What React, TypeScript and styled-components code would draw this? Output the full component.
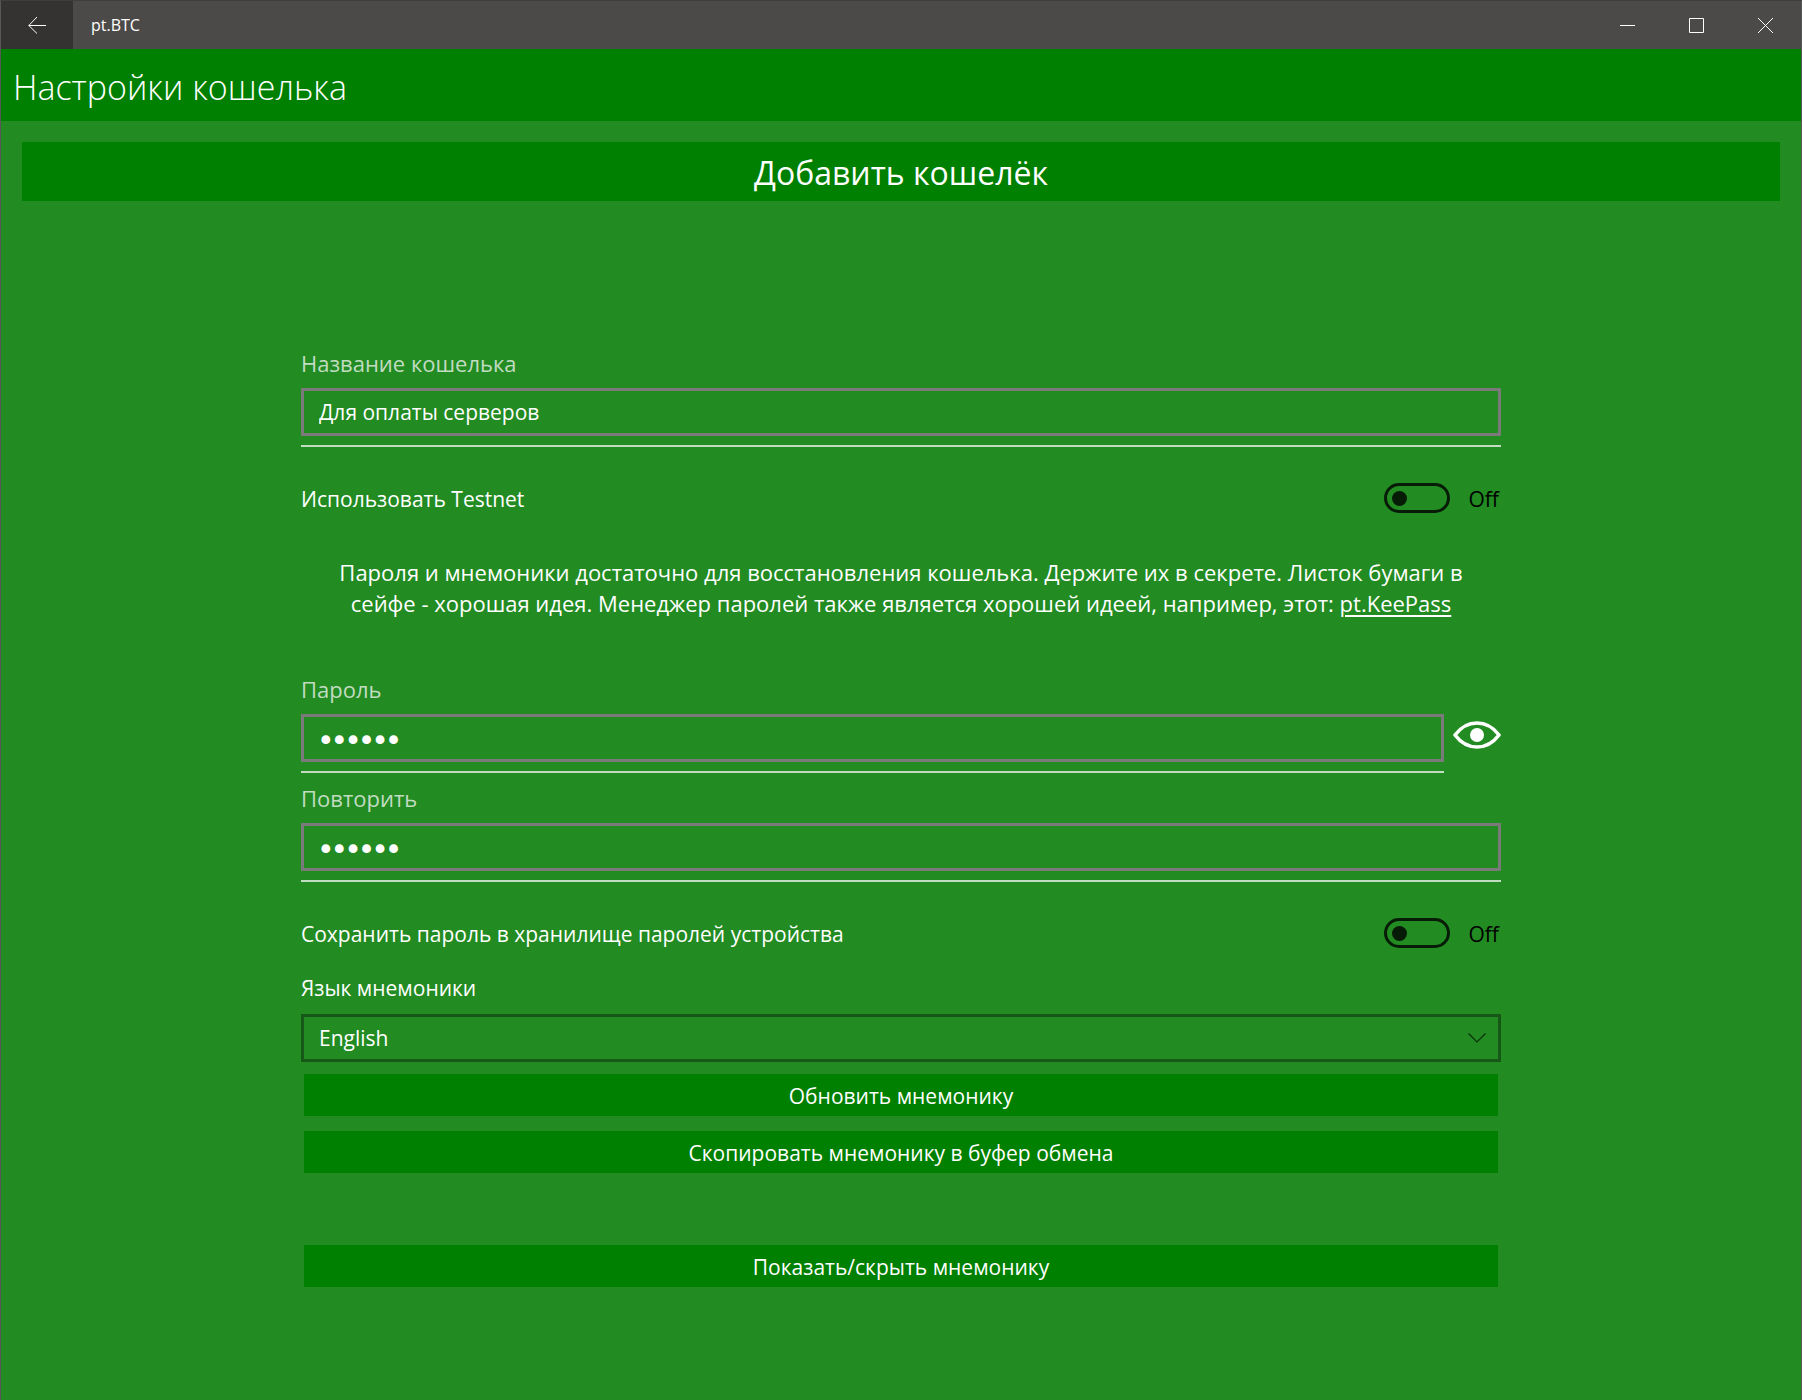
import React, { useState } from "react";
import styled, { createGlobalStyle } from "styled-components";

const GlobalStyle = createGlobalStyle`
  * { box-sizing: border-box; }
  html, body { margin: 0; background: #228b22; }
  body, button, input, select {
    font-family: "Segoe UI", "Open Sans", "Noto Sans", sans-serif;
  }
  button { border: 0; padding: 0; color: #fff; cursor: pointer; }
`;

const Window = styled.div`
  min-height: 100vh;
  display: flex;
  flex-direction: column;
  border: 1px solid #575757;
  border-top-color: #403e3c;
  border-bottom: 0;
  background: #228b22;
  color: #fff;
`;

const TitleBar = styled.div`
  display: flex;
  height: 48px;
  padding-right: 1px;
  background: #4c4a48;
`;

const BarButton = styled.button<{ $back?: boolean }>`
  display: flex;
  align-items: center;
  justify-content: center;
  width: ${(p) => (p.$back ? 72 : 69)}px;
  background: ${(p) => (p.$back ? "#353331" : "transparent")};
`;

const AppName = styled.div`
  flex: 1;
  padding-left: 18px;
  font-size: 16px;
  line-height: 48px;
`;

const Header = styled.header`
  padding: 0 12px;
  background: #008000;
`;

const Title = styled.h1`
  margin: 0;
  font-size: 34px;
  font-weight: 300;
  line-height: 76px;
  height: 72px;
`;

const Main = styled.main`
  padding: 21px;
`;

const AddButton = styled.button`
  display: block;
  width: 100%;
  height: 59px;
  padding-top: 2px;
  background: #008000;
  font-size: 32px;
  line-height: 57px;
`;

const Form = styled.form`
  display: flex;
  flex-direction: column;
  max-width: 1200px;
  margin: 137px auto 0;
`;

const FieldBox = styled.div`
  flex: 1;
  display: flex;
  flex-direction: column;
  padding-top: 10px;
  padding-bottom: 9px;
  border-bottom: 2px solid #c1dcc1;
`;

const Label = styled.label<{ $muted?: boolean }>`
  margin-bottom: ${(p) => (p.$muted ? 10 : 11)}px;
  font-size: ${(p) => (p.$muted ? 22 : 21)}px;
  line-height: 30px;
  color: ${(p) => (p.$muted ? "#c1dcc1" : "#fff")};
`;

const TextBox = styled.input`
  height: 48px;
  padding: 0 15px;
  border: 3px solid #7a7a7a;
  border-radius: 0;
  background: transparent;
  color: #fff;
  font-size: 21px;
  outline: 0;
  &[type="password"] {
    padding-top: 4px;
    font-family: "DejaVu Sans", sans-serif;
    font-size: 23px;
    -webkit-text-stroke: 2px #fff;
  }
`;

const PasswordRow = styled.div`
  display: flex;
  gap: 9px;
`;

const EyeButton = styled.button`
  align-self: center;
  height: 48px;
  margin-top: 32px;
  background: transparent;
  svg { display: block; }
`;

const SwitchRow = styled.div`
  display: flex;
  align-items: center;
  justify-content: space-between;
  height: 30px;
  margin-top: 36px;
  font-size: 21px;
  line-height: 30px;
  label, span { padding-top: 2px; }
`;

const SwitchControl = styled.div`
  display: flex;
  align-items: center;
  gap: 19px;
  padding-right: 2px;
  color: #000;
`;

const Switch = styled.input`
  appearance: none;
  display: flex;
  align-items: center;
  width: 66px;
  height: 30px;
  margin: 0;
  padding: 0 5px;
  border: 3px solid #071c07;
  border-radius: 15px;
  &::before {
    content: "";
    width: 15px;
    height: 15px;
    border-radius: 50%;
    background: #071c07;
  }
  &:checked { justify-content: flex-end; }
`;

const Notice = styled.p`
  margin: 44px 24px 45px;
  font-size: 22px;
  line-height: 31px;
  text-align: center;
  a { display: inline-block; color: #fff; text-underline-offset: 3px; }
`;

const LanguageBox = styled.div`
  display: flex;
  flex-direction: column;
  margin: 25px 0 12px;
`;

const SelectBox = styled.div`
  display: grid;
  align-items: center;
  > * { grid-area: 1 / 1; }
  > svg { justify-self: end; margin-right: 15px; pointer-events: none; }
`;

const Select = styled.select`
  appearance: none;
  width: 100%;
  height: 48px;
  padding: 0 15px;
  border: 3px solid #175717;
  border-radius: 0;
  background: transparent;
  color: #fff;
  font-size: 21px;
  option { color: #000; }
`;

const Actions = styled.div`
  display: flex;
  flex-direction: column;
  gap: 15px;
  padding: 0 3px;
`;

const ActionButton = styled.button<{ $apart?: boolean }>`
  height: 42px;
  margin-top: ${(p) => (p.$apart ? 57 : 0)}px;
  padding-top: 2px;
  background: #008000;
  font-size: 21px;
  line-height: 40px;
`;

function Field(props: { id: string; label: string; value: string; type?: string }) {
  const [value, setValue] = useState(props.value);
  return (
    <FieldBox>
      <Label $muted htmlFor={props.id}>{props.label}</Label>
      <TextBox
        id={props.id}
        type={props.type ?? "text"}
        value={value}
        onChange={(e) => setValue(e.target.value)}
      />
    </FieldBox>
  );
}

function Toggle({ id, label }: { id: string; label: string }) {
  const [on, setOn] = useState(false);
  return (
    <SwitchRow>
      <label htmlFor={id}>{label}</label>
      <SwitchControl>
        <Switch id={id} type="checkbox" checked={on} onChange={() => setOn(!on)} />
        <span>{on ? "On" : "Off"}</span>
      </SwitchControl>
    </SwitchRow>
  );
}

export default function App() {
  const [visible, setVisible] = useState(false);
  return (
    <>
      <GlobalStyle />
      <Window>
        <TitleBar>
          <BarButton $back aria-label="Назад">
            <svg width="18" height="18" viewBox="0 0 18 18" fill="none" stroke="#fff">
              <path d="M18 9.5H.8M9 1 .8 9.5 9 17.5" />
            </svg>
          </BarButton>
          <AppName>pt.BTC</AppName>
          <BarButton aria-label="Свернуть">
            <svg width="15" height="15" stroke="#fff"><path d="M0 7.5h15" /></svg>
          </BarButton>
          <BarButton aria-label="Развернуть">
            <svg width="15" height="15" fill="none" stroke="#fff"><path d="M.5.5h14v14H.5z" /></svg>
          </BarButton>
          <BarButton aria-label="Закрыть">
            <svg width="15" height="15" stroke="#fff"><path d="m0 0 15 15M15 0 0 15" /></svg>
          </BarButton>
        </TitleBar>
        <Header><Title>Настройки кошелька</Title></Header>
        <Main>
          <AddButton type="submit" form="wallet">Добавить кошелёк</AddButton>
          <Form id="wallet" onSubmit={(e) => e.preventDefault()}>
            <Field id="name" label="Название кошелька" value="Для оплаты серверов" />
            <Toggle id="testnet" label="Использовать Testnet" />
            <Notice>
              Пароля и мнемоники достаточно для восстановления кошелька. Держите их в секрете. Листок бумаги в
              сейфе - хорошая идея. Менеджер паролей также является хорошей идеей, например, этот:{" "}
              <a href="#keepass">pt.KeePass</a>
            </Notice>
            <PasswordRow>
              <Field id="password" label="Пароль" value="secret" type={visible ? "text" : "password"} />
              <EyeButton type="button" aria-label="Показать пароль" onClick={() => setVisible(!visible)}>
                <svg width="48" height="28" viewBox="0 0 48 28" fill="none">
                  <path d="M2 14C14-2 34-2 46 14 34 30 14 30 2 14Z" stroke="#fff" strokeWidth="3.6" strokeLinejoin="round" />
                  <circle cx="24" cy="14" r="7" fill="#fff" />
                </svg>
              </EyeButton>
            </PasswordRow>
            <Field id="repeat" label="Повторить" value="secret" type="password" />
            <Toggle id="save" label="Сохранить пароль в хранилище паролей устройства" />
            <LanguageBox>
              <Label htmlFor="language">Язык мнемоники</Label>
              <SelectBox>
                <Select id="language" defaultValue="English">
                  <option>English</option>
                </Select>
                <svg width="18" height="10" fill="none" stroke="#0b2e0b" strokeWidth="1.2">
                  <path d="m.5.5 8.5 8.5 8.5-8.5" />
                </svg>
              </SelectBox>
            </LanguageBox>
            <Actions>
              <ActionButton type="button">Обновить мнемонику</ActionButton>
              <ActionButton type="button">Скопировать мнемонику в буфер обмена</ActionButton>
              <ActionButton type="button" $apart>Показать/скрыть мнемонику</ActionButton>
            </Actions>
          </Form>
        </Main>
      </Window>
    </>
  );
}
